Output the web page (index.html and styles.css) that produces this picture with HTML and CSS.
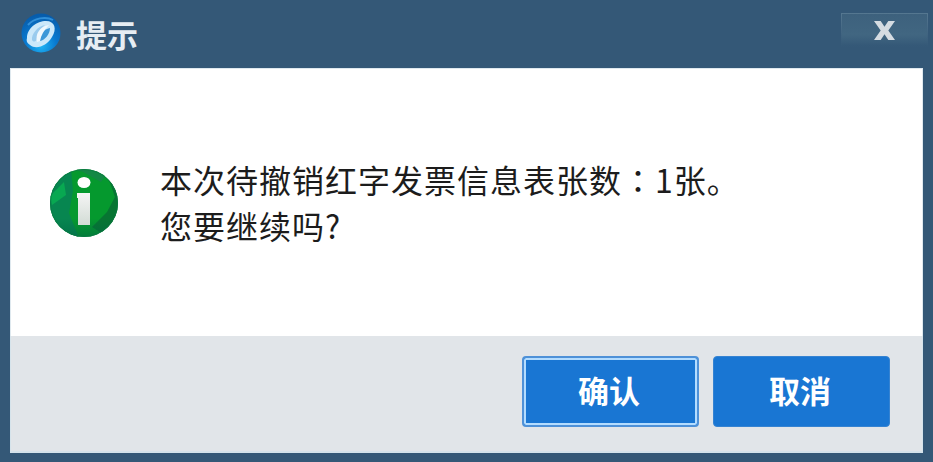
FILE: index.html
```html
<!DOCTYPE html>
<html lang="zh-CN">
<head>
<meta charset="utf-8">
<title>提示</title>
<link rel="stylesheet" href="styles.css">
</head>
<body>
<div class="dialog">
  <header class="titlebar">
    <svg class="logo" viewBox="0 0 42 42">
      <defs>
        <radialGradient id="orb" cx="50%" cy="82%" r="78%">
          <stop offset="0" stop-color="#20b5f5"/>
          <stop offset=".5" stop-color="#0879d0"/>
          <stop offset="1" stop-color="#075cab"/>
        </radialGradient>
      </defs>
      <circle cx="21" cy="21" r="19.5" fill="url(#orb)"/>
      <path d="M8 13C14 6 26 4 33 8" fill="none" stroke="#318fd8" stroke-width="2"/>
      <path d="M7 26C7 16 17 9 26 9C35 9 37 17 32 25C27 34 16 38 10 33C7 31 6 29 7 26Z" fill="#cbe8fa"/>
      <path d="M12 28C11 22 18 14 25 13C21 17 17 21 17 26C17 29 14 31 12 28Z" fill="#9acbee"/>
      <path d="M20 29C18 24 23 17 30 16C30 22 25 28 20 29Z" fill="#3c97d8"/>
      <path d="M17 30C15 22 20 14 29 13C24 18 21 23 20 29Z" fill="#f0f8fd"/>
    </svg>
    <h1 class="title">提示</h1>
    <button class="close" aria-label="关闭">
      <svg viewBox="0 0 24 22"><path d="M1 1H8L12 7L16 1H23L16 11L23 21H16L12 15L8 21H1L8 11Z"/></svg>
    </button>
  </header>
  <main class="content">
    <svg class="info" viewBox="0 0 70 70">
      <defs>
        <clipPath id="disc"><circle cx="35" cy="35" r="34"/></clipPath>
        <linearGradient id="stem" x2="0" y2="1"><stop stop-color="#f5f5f5"/><stop offset="1" stop-color="#d2dcd5"/></linearGradient>
        <linearGradient id="shade" x2="0" y2="1"><stop offset=".72" stop-color="#064" stop-opacity="0"/><stop offset="1" stop-color="#064" stop-opacity=".6"/></linearGradient>
      </defs>
      <g clip-path="url(#disc)">
        <path d="M0 0H70V70H0Z" fill="#05992e"/>
        <path d="M0 0H22L24 23L20 45L30 70H0Z" fill="#078650"/>
        <path d="M1 28L15 14L17 27L3 37Z" fill="#08a851"/>
        <path d="M20 0H62L52 14L34 4Z" fill="#138845"/>
        <path d="M58 6L70 20V60L54 66L43 59L58 44L66 29Z" fill="#077532"/>
        <path d="M0 0H70V70H0Z" fill="url(#shade)"/>
      </g>
      <circle cx="35" cy="35" r="33.5" fill="none" stroke="#0b7544" stroke-opacity=".65"/>
      <ellipse cx="35" cy="14.5" rx="6.5" ry="5.5" fill="#fff"/>
      <path d="M28 25H41V57H29V30H28Z" fill="url(#stem)"/>
    </svg>
    <div class="message">
      <p>本次待撤销红字发票信息表张数<span class="colon" lang="ja">：</span>1张。</p>
      <p>您要继续吗?</p>
    </div>
  </main>
  <footer class="actions">
    <button class="button focused">确认</button>
    <button class="button">取消</button>
  </footer>
</div>
</body>
</html>
```
FILE: styles.css
```css
* { box-sizing: border-box; }
body {
  margin: 0;
  font-family: "Noto Sans CJK SC", sans-serif;
}
.dialog {
  display: flex;
  flex-direction: column;
  width: 933px;
  height: 462px;
  padding: 0 10px 9px;
  overflow: hidden;
  background: #345877;
}
.titlebar {
  display: flex;
  flex: 0 0 68px;
  align-items: flex-start;
  padding-left: 10px;
}
.logo {
  width: 42px;
  height: 42px;
  margin-top: 12px;
}
.title {
  margin: 11px 0 0 14px;
  color: #e6edf3;
  font-size: 31px;
  font-weight: 700;
  line-height: 46px;
}
.close {
  display: flex;
  align-items: flex-start;
  justify-content: center;
  width: 87px;
  height: 34px;
  margin: 13px -5px 0 auto;
  padding: 6px 1px 0 0;
  border: 1px solid;
  border-image: linear-gradient(#557790, #345877) 1;
  background: linear-gradient(#3d617d, #416681 65%, #345877);
}
.close svg {
  width: 23px;
  height: 21px;
  fill: #d5dce2;
}
.content {
  display: flex;
  flex: 0 0 268px;
  align-items: flex-start;
  border: 1px solid #dfe9ef;
  border-bottom: 0;
  background: #fff;
}
.info {
  width: 70px;
  height: 70px;
  margin: 99px 0 0 38px;
}
.message {
  margin: 87px 0 0 41px;
  color: #1c1c1c;
  font-size: 32px;
  line-height: 46px;
  letter-spacing: 1px;
  white-space: nowrap;
}
.message p { margin: 0; }
.colon { font-family: "Noto Sans CJK JP", sans-serif; }
.actions {
  display: flex;
  flex: 1;
  gap: 14px;
  justify-content: flex-end;
  padding: 20px 32px 0 0;
  border: 1px solid #d5e3eb;
  border-width: 0 1px 2px;
  background: #e1e5e9;
}
.button {
  width: 177px;
  height: 71px;
  padding: 0 3px 4px 0;
  border: 1px solid #3583d2;
  border-radius: 4px;
  background: #1976d3;
  color: #fff;
  font: 700 31px/44px "Noto Sans CJK SC", sans-serif;
}
.focused {
  border: 2px solid #4e91d8;
  box-shadow: inset 0 0 0 2px #b3dcff;
}
```
